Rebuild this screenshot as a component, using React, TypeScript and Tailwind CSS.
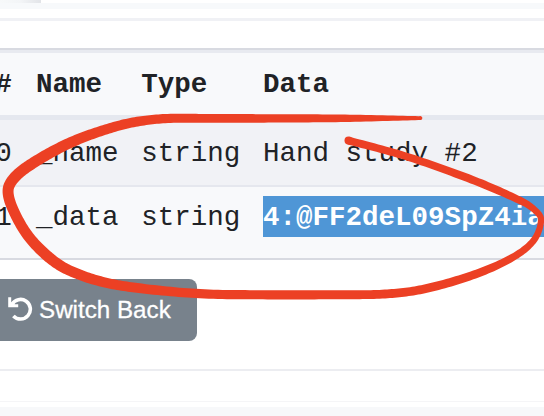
import React from "react";

const columns = "grid grid-cols-[18px_82.5px_99px_1fr] gap-x-[22.8px] -ml-[4.8px] items-center whitespace-pre";

type RowProps = { index: string; name: string; type: string; children: React.ReactNode };

function Cells({ index, name, type, children }: RowProps) {
  return (
    <div className={columns}>
      <span>{index}</span>
      <span>{name}</span>
      <span>{type}</span>
      <span>{children}</span>
    </div>
  );
}

function RotateLeft() {
  return (
    <svg className="h-[26px] w-[26px] shrink-0" viewBox="0 0 26 26" fill="none" stroke="white">
      <path d="M5 7.4 A9.8 9.8 0 1 1 6.4 18.9" strokeWidth="3.6" />
      <path d="M2.7 0.2 V8.7 H11.2" strokeWidth="3" />
      <path d="M3.5 5.6 L5.8 5 L8.4 8.5 L4 9.5 Z" fill="white" stroke="none" />
    </svg>
  );
}

// Hand-drawn stroke: x, y and pen width at each sample of its centre line.
type Sample = [number, number, number];
const stroke: Sample[] = [
  [421, 118.1, 3.8], [345, 118.3, 7.4], [272, 118.4, 8.4], [210, 118.4, 8.8], [165, 118.6, 9.2],
  [131, 122.8, 9.8], [98, 132, 10.2], [67, 144.2, 10.8], [35, 161.8, 11.2], [16, 176, 11.2],
  [8.2, 189, 11], [12, 207, 10.8], [27.5, 235, 10.8], [48, 256.5, 11], [67, 269.3, 10.6],
  [98, 280.7, 10.2], [133, 287.4, 9.8], [200, 293.7, 9.2], [272, 294.8, 9.2], [340, 294.7, 9],
  [385, 294, 8.8], [422, 289.4, 8.7], [472, 275.4, 8.4], [512, 257.8, 7.4], [534, 240, 6.6],
  [541, 219, 6.2], [533, 208.5, 6.6], [520, 200.4, 7.4], [472, 179.7, 8], [405, 156, 7.6],
  [348.5, 140.6, 8],
];

function outline(samples: Sample[]) {
  const points: Sample[] = [];
  for (let i = 0; i < samples.length - 1; i++) {
    const a = samples[Math.max(0, i - 1)];
    const b = samples[i];
    const c = samples[i + 1];
    const d = samples[Math.min(samples.length - 1, i + 2)];
    const scale = Math.hypot(c[0] - b[0], c[1] - b[1]);
    const before = Math.hypot(b[0] - a[0], b[1] - a[1]) || scale;
    const after = Math.hypot(d[0] - c[0], d[1] - c[1]) || scale;
    for (let s = 0; s < 16; s++) {
      const t = s / 16;
      points.push([0, 1, 2].map((k) => {
        const m1 = ((c[k] - a[k]) * scale) / (before + scale);
        const m2 = ((d[k] - b[k]) * scale) / (after + scale);
        return (2 * t ** 3 - 3 * t ** 2 + 1) * b[k] + (t ** 3 - 2 * t ** 2 + t) * m1 + (-2 * t ** 3 + 3 * t ** 2) * c[k] + (t ** 3 - t ** 2) * m2;
      }) as Sample);
    }
  }
  points.push(samples[samples.length - 1]);
  const left: string[] = [];
  const right: string[] = [];
  points.forEach(([x, y, w], i) => {
    const p = points[Math.max(0, i - 1)];
    const n = points[Math.min(points.length - 1, i + 1)];
    const length = Math.hypot(n[0] - p[0], n[1] - p[1]);
    const ox = (-(n[1] - p[1]) / length) * (w / 2);
    const oy = ((n[0] - p[0]) / length) * (w / 2);
    left.push(`${(x + ox).toFixed(2)},${(y + oy).toFixed(2)}`);
    right.unshift(`${(x - ox).toFixed(2)},${(y - oy).toFixed(2)}`);
  });
  return [...left, ...right].join(" ");
}

function Marker() {
  return (
    <svg className="pointer-events-none absolute inset-0 h-[416px] w-[544px]" viewBox="0 0 544 416" fill="#ec4024">
      <polygon points={outline(stroke)} />
      <circle cx="420.5" cy="118.1" r="1.9" />
      <circle cx="348.5" cy="140.6" r="4" />
    </svg>
  );
}

export default function App() {
  return (
    <main className="relative flex h-[416px] w-[544px] flex-col overflow-hidden bg-white">
      <div className="flex h-[9px] flex-col bg-[#f7f9fb]">
        <div className="flex h-[3px] bg-white">
          <div className="w-[41px] bg-linear-to-r from-[#f7f9fa] via-[#f3f5f7] to-[#e2e4e8]" />
        </div>
      </div>
      <div className="h-[12px] border-b-3 border-[#f0f1f5]" />
      <div className="h-[27px]" />

      <section className="font-['Liberation_Mono','Courier_New',monospace] text-[27.5px] leading-none text-[#202226]">
        <div className="flex h-[72px] flex-col justify-center border-t-2 border-b-5 border-t-[#d8dae1] border-b-[#e5e8ef] bg-[#f8f9fb] pt-[4px] font-bold shadow-[inset_0_3px_0_#e8eaf0]">
          <Cells index="#" name="Name" type="Type">Data</Cells>
        </div>
        <div className="flex h-[67px] flex-col justify-center border-b-2 border-[#e5e7ee] bg-[#f1f2f6] pt-[3px]">
          <Cells index="0" name="_name" type="string">Hand study #2</Cells>
        </div>
        <div className="flex h-[73px] flex-col border-b-2 border-[#d8dae1] bg-[#f8f9fb] pt-[10px]">
          <Cells index="1" name="_data" type="string">
            <span className="-mt-px mb-px flex h-[41px] items-center bg-[#4f96d6] pt-[2px] font-bold text-white">4:@FF2deL09SpZ4ia</span>
          </Cells>
        </div>
      </section>

      <div className="h-[111px] border-b-2 border-[#ecedf1] pt-[19px]">
        <button className="flex h-[62px] w-[196.5px] items-center rounded-r-[8px] bg-[#78828c] pl-[6.5px] text-white">
          <RotateLeft />
          <span className="ml-[6.5px] whitespace-nowrap font-['Liberation_Sans',Arial,sans-serif] text-[24.2px] leading-none [-webkit-text-stroke:0.3px_white]">Switch Back</span>
        </button>
      </div>
      <div className="h-[31px] border-b border-[#f5f5f7]" />
      <div className="h-[5px]" />
      <div className="h-[9px] bg-[#f7f8fa]" />
      <Marker />
    </main>
  );
}
